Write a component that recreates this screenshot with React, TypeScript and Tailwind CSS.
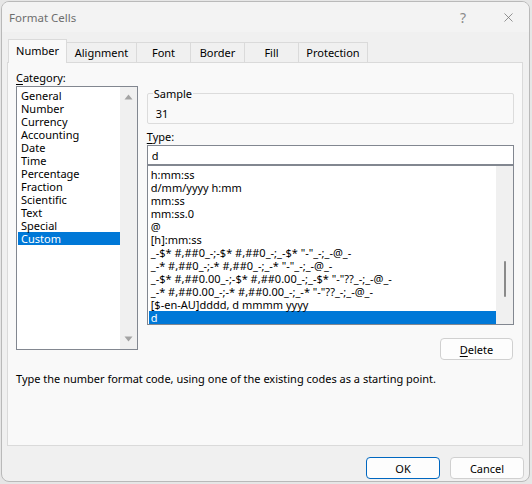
import { X } from 'lucide-react'

const CATEGORIES = [
  'General', 'Number', 'Currency', 'Accounting', 'Date', 'Time',
  'Percentage', 'Fraction', 'Scientific', 'Text', 'Special', 'Custom',
]

const FORMATS = [
  'h:mm:ss',
  'd/mm/yyyy h:mm',
  'mm:ss',
  'mm:ss.0',
  '@',
  '[h]:mm:ss',
  '_-$* #,##0_-;-$* #,##0_-;_-$* "-"_-;_-@_-',
  '_-* #,##0_-;-* #,##0_-;_-* "-"_-;_-@_-',
  '_-$* #,##0.00_-;-$* #,##0.00_-;_-$* "-"??_-;_-@_-',
  '_-* #,##0.00_-;-* #,##0.00_-;_-* "-"??_-;_-@_-',
  '[$-en-AU]dddd, d mmmm yyyy',
  'd',
]

const TABS = [
  { label: 'Number', w: 'w-[59px]' },
  { label: 'Alignment', w: 'w-[70px]' },
  { label: 'Font', w: 'w-[54px]' },
  { label: 'Border', w: 'w-[54px]' },
  { label: 'Fill', w: 'w-[54px]' },
  { label: 'Protection', w: 'w-[69px]' },
]

function Arrow({ up }: { up?: boolean }) {
  return (
    <svg width="9" height="6" viewBox="0 0 9 6" className="fill-[#a3a3a3]">
      {up ? <path d="M4.5 0.5 L8.5 5.5 H0.5 Z" /> : <path d="M0.5 0.5 H8.5 L4.5 5.5 Z" />}
    </svg>
  )
}

export default function App() {
  return (
    <div
      className="w-[532px] h-[484px] bg-[#e6e6e6] pt-[1px] pl-[1px] text-[11px] leading-[13px] text-black overflow-hidden"
      style={{ fontFamily: '"Noto Sans", "Liberation Sans", sans-serif' }}
    >
      <div className="w-[529px] h-[481px] rounded-[8px] border border-[#b9b9b9] bg-[#f0f0f0] flex flex-col overflow-hidden">
        {/* Title bar */}
        <div className="h-[30px] bg-[#f3f3f3] flex items-center pl-[7px] pr-[13px]">
          <span className="text-[#6e6e6e] text-[11.5px]">Format Cells</span>
          <span className="ml-auto text-[#8a8a8a] text-[14px] mr-[35px]">?</span>
          <X size={15} strokeWidth={1.2} className="text-[#707070]" />
        </div>

        {/* Tabs */}
        <div className="flex items-end pl-[6px] pt-[7px] h-[30px] relative z-10">
          {TABS.map((t, i) =>
            i === 0 ? (
              <div
                key={t.label}
                className={`${t.w} h-[24px] -mb-[1px] bg-[#f9f9f9] border border-b-0 border-[#dadada] flex items-center justify-center pb-[2px]`}
              >
                {t.label}
              </div>
            ) : (
              <div
                key={t.label}
                className={`${t.w} h-[20px] bg-[#f0f0f0] border border-b-0 border-l-0 border-[#dadada] flex items-center justify-center`}
              >
                {t.label}
              </div>
            )
          )}
        </div>

        {/* Panel */}
        <div className="ml-[5px] w-[516px] h-[384px] bg-[#f9f9f9] border border-[#dadada] flex flex-col px-[8px]">
          <div className="flex gap-[9px] pt-[8px]">
            {/* Category column */}
            <div className="w-[122px] flex flex-col">
              <div className="h-[15px]">
                <span className="underline underline-offset-2">C</span>ategory:
              </div>
              <div className="h-[264px] border border-[#828790] bg-white flex">
                <div className="flex-1 pt-[2px] pl-[1px]">
                  {CATEGORIES.map(c => (
                    <div
                      key={c}
                      className={
                        c === 'Custom'
                          ? 'h-[13px] pl-[3px] bg-[#0078d7] text-white'
                          : 'h-[13px] pl-[3px]'
                      }
                    >
                      {c}
                    </div>
                  ))}
                </div>
                <div className="w-[17px] bg-[#f0f0f0] flex flex-col items-center justify-between py-[7px]">
                  <Arrow up />
                  <Arrow />
                </div>
              </div>
            </div>

            {/* Right column */}
            <div className="w-[368px] flex flex-col pt-[22px]">
              <div className="relative h-[31px] border border-[#dcdcdc] rounded-[2px]">
                <span className="absolute -top-[7px] left-[5px] bg-[#f9f9f9] px-[1px]">Sample</span>
                <div className="pl-[8px] pt-[13px]">31</div>
              </div>
              <div className="h-[21px] pt-[6px]">
                <span className="underline underline-offset-2">T</span>ype:
              </div>
              <div className="h-[20px] border border-[#828790] bg-white pl-[4px] flex items-center">d</div>
              <div className="h-[160px] border border-[#828790] bg-white flex">
                <div className="flex-1 pt-[2px] pl-[1px] overflow-hidden">
                  {FORMATS.map((f, i) => (
                    <div
                      key={i}
                      className={
                        i === FORMATS.length - 1
                          ? 'h-[13px] pl-[2px] bg-[#0078d7] text-white whitespace-pre'
                          : 'h-[13px] pl-[2px] whitespace-pre'
                      }
                    >
                      {f}
                    </div>
                  ))}
                </div>
                <div className="w-[17px] bg-[#f0f0f0] flex justify-center pt-[95px]">
                  <div className="w-[2px] h-[36px] bg-[#8a8a8a] rounded-full" />
                </div>
              </div>
              <div className="flex justify-end pt-[13px]">
                <button className="w-[73px] h-[22px] rounded-[4px] border border-[#d0d0d0] bg-[#fdfdfd] mr-[1px]">
                  <span className="underline underline-offset-2">D</span>elete
                </button>
              </div>
            </div>
          </div>
          <div className="pt-[12px]">
            Type the number format code, using one of the existing codes as a starting point.
          </div>
        </div>

        {/* Footer */}
        <div className="flex justify-end gap-[10px] pt-[11px] pr-[5px]">
          <button className="w-[74px] h-[22px] rounded-[4px] border border-[#0067c0] bg-[#fdfdfd]">OK</button>
          <button className="w-[74px] h-[22px] rounded-[4px] border border-[#d0d0d0] bg-[#fdfdfd]">Cancel</button>
        </div>
      </div>
    </div>
  )
}
